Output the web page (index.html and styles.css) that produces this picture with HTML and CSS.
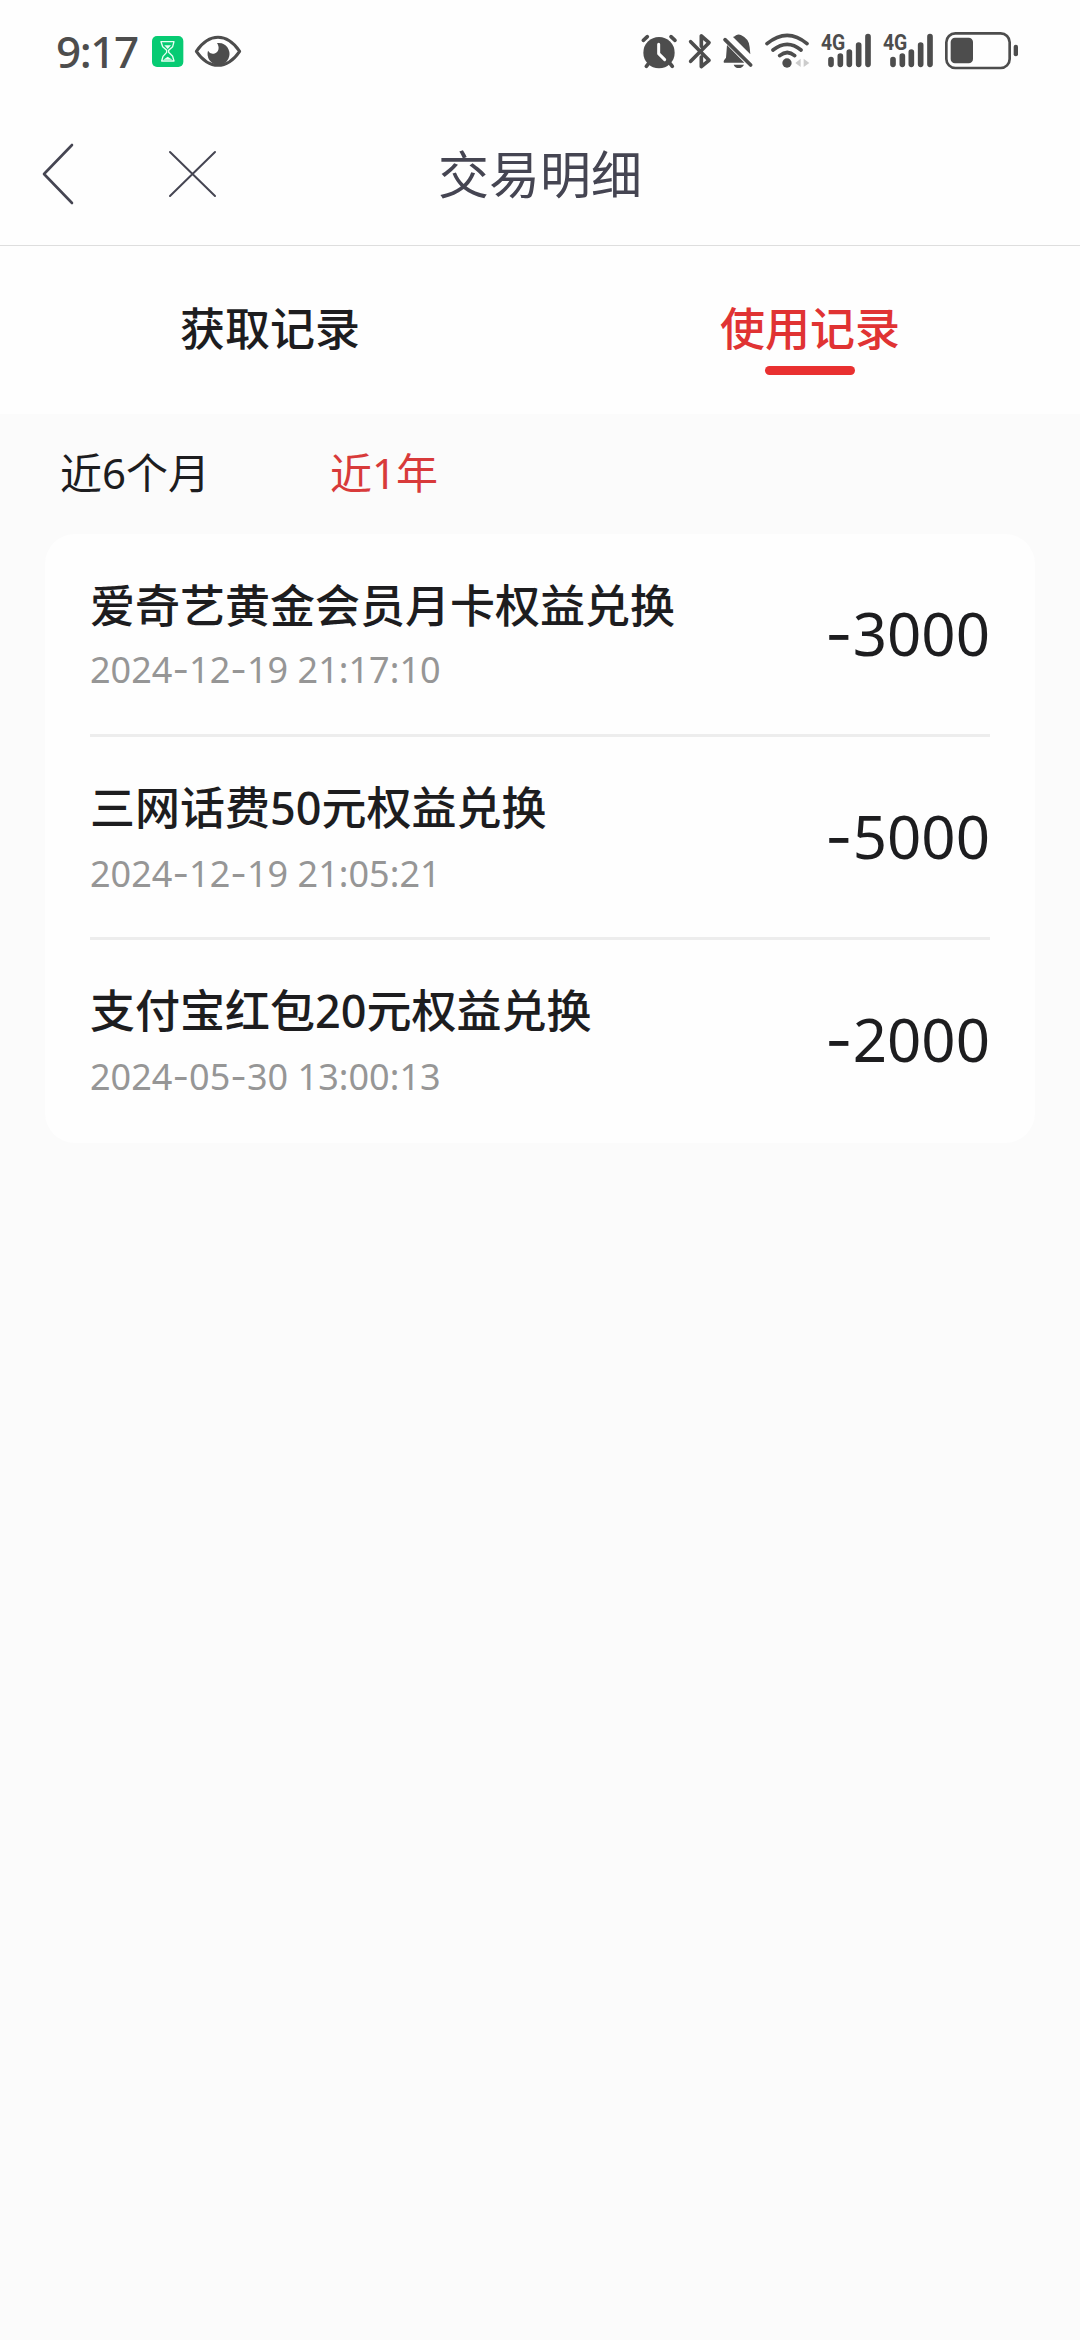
FILE: index.html
```html
<!DOCTYPE html>
<html lang="zh-CN">
<head>
<meta charset="utf-8">
<title>交易明细</title>
<link rel="stylesheet" href="styles.css">
</head>
<body>
<div class="status">
  <div class="status-left">
    <span class="time">9:17</span>
    <svg class="app-badge" width="36" height="40" viewBox="330 30 108 120">
      <rect x="336" y="48" width="94" height="93" rx="15" fill="#07cb73"/>
      <g fill="none" stroke="#e9fff4" stroke-width="4" stroke-linejoin="round">
        <path d="M363 65H402L398 80L386 91V97L398 109L402 123H365L369 109L380 97V91L368 80Z"/>
      </g>
      <path d="M373 76H393L383 87ZM370 119L383 110L397 119Z" fill="#e9fff4"/>
    </svg>
    <svg class="eye" width="48" height="40" viewBox="462 30 144 120">
      <path d="M469 94Q498 52 534 52T599 94Q570 136 534 136T469 94Z" fill="none" stroke="#4d4d4d" stroke-width="9" stroke-linejoin="round"/>
      <path d="M531 69A33 33 0 1 1 504 92Q511 104 522 101C538 97 539 81 531 69Z" fill="#4d4d4d"/>
    </svg>
  </div>
  <div class="status-right">
    <svg width="38" height="40" viewBox="60 30 114 120">
      <g stroke="#4d4d4d" stroke-width="11" stroke-linecap="round"><path d="M70 61L82 50M153 50L165 61M86 130L79 139M150 130L157 139"/></g>
      <circle cx="117" cy="98" r="47" fill="#4d4d4d"/>
      <path d="M116 73V101L134 119" fill="none" stroke="#fff" stroke-width="9" stroke-linecap="round" stroke-linejoin="round"/>
    </svg>
    <svg width="24" height="40" viewBox="204 30 72 120">
      <path d="M212 65L267 121L244 140V111M212 124L267 68L244 48V79" fill="none" stroke="#4d4d4d" stroke-width="11" stroke-linecap="round" stroke-linejoin="round"/>
    </svg>
    <svg width="32" height="40" viewBox="306 30 96 120">
      <path d="M321 75L373 128H312Q308 124 318 113Z M339 51Q345 50 348 46Q356 41 364 46Q388 57 389 82L391 103Z M341 134H372Q367 144 356 144T341 134Z" fill="#4d4d4d"/>
      <path d="M315 59L392 135" stroke="#4d4d4d" stroke-width="11" stroke-linecap="round"/>
    </svg>
    <svg width="46" height="40" viewBox="432 30 138 120">
      <g fill="none" stroke="#4d4d4d" stroke-width="11" stroke-linecap="round"><path d="M441 71Q502 21 561 71M459 90Q502 56 543 90M479 107Q502 88 524 107"/></g>
      <circle cx="501" cy="129" r="14" fill="#4d4d4d"/>
      <path d="M542 116V141L526 129ZM551 116V141L568 129Z" fill="#ccc"/>
    </svg>
    <svg width="52" height="40" viewBox="30 30 156 120">
      <text class="net" x="33" y="90" textLength="73" lengthAdjust="spacingAndGlyphs">4G</text>
      <path d="M63 119V133M91 108V133M118 96V133M146 75V133M174 50V133" stroke="#4d4d4d" stroke-width="17" stroke-linecap="round"/>
    </svg>
    <svg width="52" height="40" viewBox="30 30 156 120">
      <text class="net" x="33" y="90" textLength="73" lengthAdjust="spacingAndGlyphs">4G</text>
      <path d="M63 119V133M91 108V133M118 96V133M146 75V133M174 50V133" stroke="#4d4d4d" stroke-width="17" stroke-linecap="round"/>
    </svg>
    <svg width="75" height="40" viewBox="402 30 225 120">
      <rect x="409" y="40" width="190" height="104" rx="27" fill="none" stroke="#4d4d4d" stroke-width="8"/>
      <rect x="422" y="53" width="67" height="77" rx="13" fill="#4d4d4d"/>
      <rect x="611" y="74" width="13" height="35" rx="6" fill="#4d4d4d"/>
    </svg>
  </div>
</div>
<header class="nav">
  <svg class="back" width="40" height="64" viewBox="0 0 40 64"><path d="M31 3L3 32L31 61" fill="none" stroke="#454552" stroke-width="2.6" stroke-linecap="round" stroke-linejoin="round"/></svg>
  <svg class="close" width="50" height="50" viewBox="0 0 50 50"><path d="M3 3L48 47M48 3L3 47" stroke="#454552" stroke-width="2" stroke-linecap="round"/></svg>
  <h1 class="title">交易明细</h1>
</header>
<nav class="tabs">
  <div class="tab">获取记录</div>
  <div class="tab active">使用记录</div>
</nav>
<div class="filters">
  <div class="filter">近<span class="num">6</span>个月</div>
  <div class="filter active">近<span class="num">1</span>年</div>
</div>
<main class="card">
  <section class="row">
    <div class="info">
      <div class="name">爱奇艺黄金会员月卡权益兑换</div>
      <div class="date">2024<span class="dash">-</span>12<span class="dash">-</span>19 21:17:10</div>
    </div>
    <div class="amount"><span class="dash">-</span>3000</div>
  </section>
  <section class="row">
    <div class="info">
      <div class="name">三网话费<span class="num">50</span>元权益兑换</div>
      <div class="date">2024<span class="dash">-</span>12<span class="dash">-</span>19 21:05:21</div>
    </div>
    <div class="amount"><span class="dash">-</span>5000</div>
  </section>
  <section class="row">
    <div class="info">
      <div class="name">支付宝红包<span class="num">20</span>元权益兑换</div>
      <div class="date">2024<span class="dash">-</span>05<span class="dash">-</span>30 13:00:13</div>
    </div>
    <div class="amount"><span class="dash">-</span>2000</div>
  </section>
</main>
</body>
</html>
```
FILE: styles.css
```css
* { box-sizing: border-box; }
body {
  margin: 0;
  min-height: 2340px;
  background: #fbfbfb;
  color: #1d1d1f;
  font-family: "Noto Sans CJK SC", sans-serif;
}
svg { display: block; flex: none; }
.status {
  height: 104px;
  padding: 30px 61px 0 56px;
  display: flex;
  justify-content: space-between;
  align-items: flex-start;
  background: #fefefe;
}
.status-left, .status-right { display: flex; height: 40px; align-items: center; }
.status-right { gap: 10px; }
.time {
  width: 94px;
  font: 500 44px/40px "Noto Sans", sans-serif;
  letter-spacing: -1.4px;
  color: #4d4d4d;
  padding-top: 1px;
}
.eye { margin-left: 8px; }
.net { font: 700 64px Roboto, sans-serif; fill: #4d4d4d; }
.nav {
  height: 142px;
  padding: 0 41px 2px;
  display: grid;
  grid-template-columns: 126px 1fr 126px;
  align-items: center;
  background: #fefefe;
  border-bottom: 1px solid #dedede;
}
.title {
  grid-column: 2;
  margin: 0;
  padding-bottom: 3px;
  text-align: center;
  font-size: 51px;
  line-height: 76px;
  font-weight: 400;
  color: #454552;
}
.back, .close, .title { grid-row: 1; }
.back { grid-column: 1; }
.close { grid-column: 2; }
.tabs {
  height: 168px;
  display: grid;
  grid-template-columns: 1fr 1fr;
  background: #fefefe;
  font-size: 45px;
  font-weight: 500;
}
.tab {
  display: flex;
  flex-direction: column;
  align-items: center;
  padding-top: 48px;
  line-height: 66px;
}
.tab.active { color: #e03333; }
.tab.active::after {
  content: "";
  width: 90px;
  height: 9px;
  margin-top: 6px;
  border-radius: 5px;
  background: #e93030;
}
.filters {
  height: 120px;
  padding: 0 60px 8px;
  display: grid;
  grid-template-columns: 270px auto;
  align-items: center;
  justify-content: start;
  font-size: 42px;
}
.filter.active { color: #d83a3a; }
.num { font-family: "Noto Sans", sans-serif; }
.card {
  margin: 0 45px;
  padding: 0 45px;
  border-radius: 30px;
  background: #fefefe;
}
.row {
  height: 203px;
  display: flex;
  justify-content: space-between;
  align-items: center;
  border-bottom: 3px solid #ededed;
}
.row:last-child { border-color: transparent; }
.info { padding-top: 5px; }
.name { font-size: 45px; line-height: 66px; font-weight: 500; }
.date {
  font: 400 36px/66px "Noto Sans", sans-serif;
  letter-spacing: 0.03px;
  color: #969696;
}
.amount { font: 400 60px/80px "Noto Sans", sans-serif; padding-bottom: 2px; }
.dash { font-family: Inter, sans-serif; }
```
